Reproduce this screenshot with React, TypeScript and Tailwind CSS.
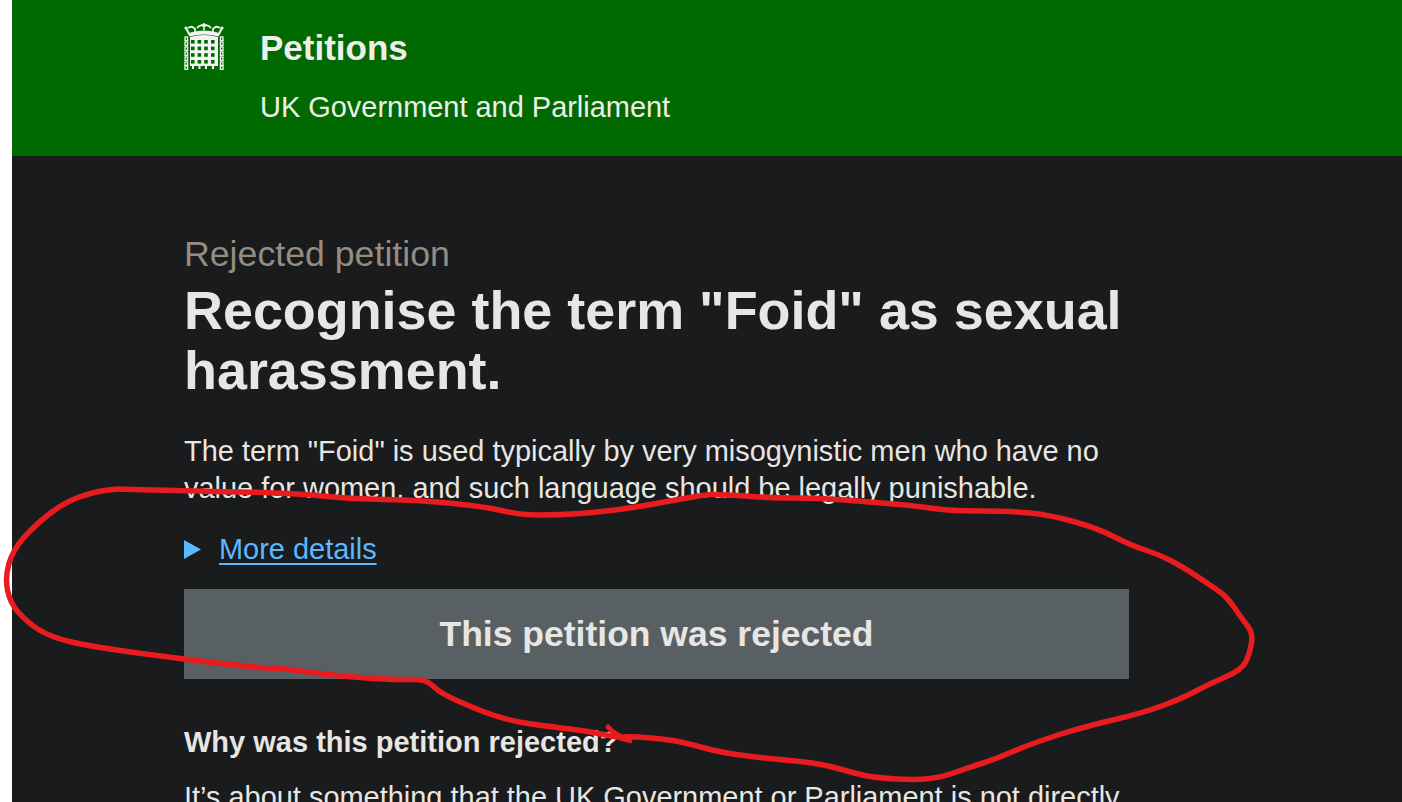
import React from 'react';

// hand-drawn annotation, traced clockwise from the top left
const scribble: [number, number][] = [
  [117, 489], [187, 491], [293, 493], [350, 499], [420, 500], [487, 507], [520, 515], [560, 515], [600, 512],
  [637, 507], [670, 501], [703, 495], [720, 494], [770, 498], [820, 498], [870, 502], [917, 506], [950, 511],
  [1010, 511], [1050, 515], [1097, 528], [1130, 545], [1160, 555], [1183, 567], [1213, 587], [1227, 597],
  [1243, 620], [1253, 633], [1250, 653], [1242, 670], [1207, 685], [1183, 698], [1143, 713], [1083, 727],
  [1033, 743], [993, 760], [967, 768], [943, 777], [917, 780], [877, 778], [853, 773], [827, 765], [797, 761],
  [753, 757], [720, 752], [697, 746], [673, 740], [630, 736], [620, 738], [587, 731], [553, 727], [503, 720],
  [443, 695], [430, 683], [420, 679], [393, 680], [327, 675], [290, 669], [250, 667], [183, 659], [93, 647],
  [50, 637], [27, 622], [10, 603], [5, 577], [13, 550], [33, 527], [63, 503], [93, 492], [117, 489],
];

const smoothPath = (pts: [number, number][]) => {
  let d = `M${pts[0][0]} ${pts[0][1]}`;
  for (let i = 1; i < pts.length - 1; i++) {
    const mx = (pts[i][0] + pts[i + 1][0]) / 2;
    const my = (pts[i][1] + pts[i + 1][1]) / 2;
    d += ` Q${pts[i][0]} ${pts[i][1]} ${mx} ${my}`;
  }
  const last = pts[pts.length - 1];
  return `${d} L${last[0]} ${last[1]}`;
};

const Portcullis: React.FC = () => (
  <svg width="40" height="48" viewBox="0 0 40 48" className="shrink-0">
    {/* crown */}
    <g fill="none" stroke="#f4f4f4" strokeWidth="2">
      <path d="M2 6 L5 12 Q20 7 35 12 L38 6" />
      <path d="M5 13 Q20 9 35 13" strokeWidth="3" />
      <path d="M4 6 Q8 3 11 7 M36 6 Q32 3 29 7 M13 6 Q16 2 20 4 Q24 2 27 6" strokeWidth="1.8" />
      <path d="M20 1 V8 M17 3 H23 M11 6 V10 M29 6 V10" strokeWidth="1.6" />
    </g>
    <g fill="#f4f4f4">
      <circle cx="2" cy="6" r="1.6" />
      <circle cx="38" cy="6" r="1.6" />
    </g>
    {/* chains */}
    <g fill="none" stroke="#f4f4f4" strokeWidth="1.3">
      {[15, 20, 25, 30, 35, 40, 44].map((y) => (
        <React.Fragment key={y}>
          <rect x="1" y={y} width="2.6" height="3.4" />
          <rect x="36.4" y={y} width="2.6" height="3.4" />
        </React.Fragment>
      ))}
    </g>
    {/* gate */}
    <path d="M6 15 Q20 11 34 15 V44 H6 Z" fill="#f4f4f4" />
    <path d="M9 44 V47 M15.5 44 V47 M22 44 V47 M29 44 V47" stroke="#f4f4f4" strokeWidth="2" />
    <g fill="#006a00">
      {[18, 24.6, 31.2, 38].map((y) =>
        [7, 13.6, 20.2, 27].map((x) => <rect key={`${x}-${y}`} x={x} y={y} width="3.6" height="3.6" />)
      )}
    </g>
  </svg>
);

const App: React.FC = () => {
  return (
    <div className="relative h-[802px] overflow-hidden bg-white pl-3 font-['Liberation_Sans',Arial,sans-serif]">
      <header className="flex h-[156px] gap-[36px] bg-[#006a00] pl-[172px] pt-[22px] text-[#f0eeeb]">
        <Portcullis />
        <div>
          <div className="mt-[2px] text-[35px] font-bold leading-[48px]">Petitions</div>
          <div className="mt-[16px] text-[28.95px] leading-[38px]">UK Government and Parliament</div>
        </div>
      </header>

      <main className="min-h-[646px] bg-[#191b1d] pl-[172px] pt-[78px] text-[#e8e6e3]">
        <div className="w-[945px]">
          <div className="text-[35.7px] leading-[40px] text-[#938d82]">Rejected petition</div>
          <h1 className="mt-[6px] text-[53.9px] font-bold leading-[60px]">
            Recognise the term "Foid" as sexual harassment.
          </h1>
          <p className="mt-[33px] text-[28.95px] leading-[37px]">
            The term "Foid" is used typically by very misogynistic men who have no value for women, and such language
            should be legally punishable.
          </p>
          <div className="mt-[24px] flex items-center gap-[18px] text-[28.95px] leading-[37px] text-[#5cb8ff]">
            <svg width="17" height="19" viewBox="0 0 17 19" className="shrink-0">
              <path d="M0 0 L17 9.5 L0 19 Z" fill="#5cb8ff" />
            </svg>
            <a href="#" className="underline underline-offset-[4px]">
              More details
            </a>
          </div>
          <div className="mt-[21px] flex h-[90px] items-center justify-center bg-[#596064] pt-[2px] text-[35.5px] font-bold">
            This petition was rejected
          </div>
          <h2 className="mt-[45px] text-[29px] font-bold leading-[37px]">Why was this petition rejected?</h2>
          <p className="mt-[18px] text-[28.95px] leading-[37px]">
            It’s about something that the UK Government or Parliament is not directly
          </p>
        </div>
      </main>

      {/* red marker annotation on top of the page */}
      <svg width="1402" height="802" className="pointer-events-none absolute inset-0">
        <path d={smoothPath(scribble)} fill="none" stroke="#e81c1f" strokeWidth="5.5" strokeLinejoin="round" />
        <path d="M608 727 Q614 735 632 741 L620 738" fill="none" stroke="#e81c1f" strokeWidth="5" strokeLinecap="round" />
      </svg>
    </div>
  );
};

export default App;
